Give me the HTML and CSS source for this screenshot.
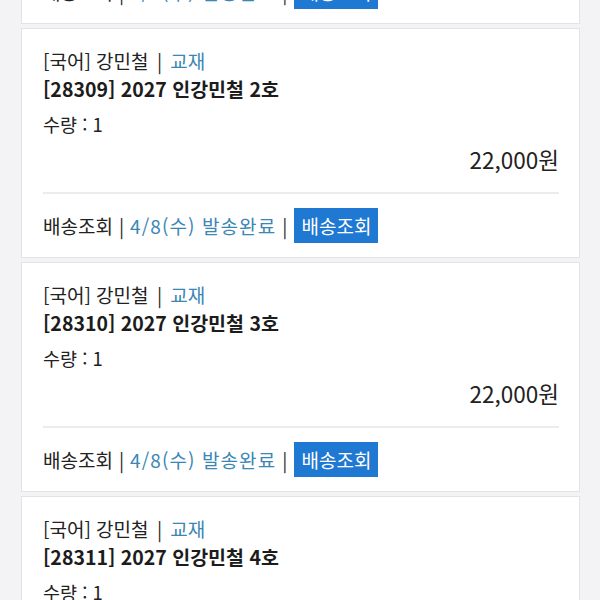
FILE: index.html
```html
<!DOCTYPE html>
<html lang="ko">
<head>
<meta charset="utf-8">
<link rel="stylesheet" href="styles.css">
</head>
<body>
<div class="list">
  <div class="card">
    <div class="info">
      <div class="cat">[국어] 강민철 <span class="bar">|</span> <span class="link">교재</span></div>
      <div class="title">[28308] 2027 인강민철 1호</div>
      <div class="qty">수량 : 1</div>
      <div class="price">22,000원</div>
    </div>
    <div class="ship">
      <span>배송조회</span><span class="bar">|</span><span class="link">4/8(수) 발송완료</span><span class="bar">|</span><span class="btn">배송조회</span>
    </div>
  </div>
  <div class="card">
    <div class="info">
      <div class="cat">[국어] 강민철 <span class="bar">|</span> <span class="link">교재</span></div>
      <div class="title">[28309] 2027 인강민철 2호</div>
      <div class="qty">수량 : 1</div>
      <div class="price">22,000원</div>
    </div>
    <div class="ship">
      <span>배송조회</span><span class="bar">|</span><span class="link">4/8(수) 발송완료</span><span class="bar">|</span><span class="btn">배송조회</span>
    </div>
  </div>
  <div class="card">
    <div class="info">
      <div class="cat">[국어] 강민철 <span class="bar">|</span> <span class="link">교재</span></div>
      <div class="title">[28310] 2027 인강민철 3호</div>
      <div class="qty">수량 : 1</div>
      <div class="price">22,000원</div>
    </div>
    <div class="ship">
      <span>배송조회</span><span class="bar">|</span><span class="link">4/8(수) 발송완료</span><span class="bar">|</span><span class="btn">배송조회</span>
    </div>
  </div>
  <div class="card">
    <div class="info">
      <div class="cat">[국어] 강민철 <span class="bar">|</span> <span class="link">교재</span></div>
      <div class="title">[28311] 2027 인강민철 4호</div>
      <div class="qty">수량 : 1</div>
      <div class="price">22,000원</div>
    </div>
    <div class="ship">
      <span>배송조회</span><span class="bar">|</span><span class="link">4/8(수) 발송완료</span><span class="bar">|</span><span class="btn">배송조회</span>
    </div>
  </div>
</div>
</body>
</html>
```
FILE: styles.css
```css
html, body {
  margin: 0;
  padding: 0;
  background: #f3f3f5;
  overflow: hidden;
}
body {
  font-family: "Noto Sans CJK KR", "Noto Sans", sans-serif;
  color: #222;
  width: 600px;
  height: 600px;
}
.list {
  display: flex;
  flex-direction: column;
  gap: 4px;
  padding: 0 20px 0 21px;
  margin-top: -206px;
}
.card {
  background: #fff;
  border: 1px solid #e3e3e5;
  padding: 0 20px 0 21px;
  height: 228px;
}
.info {
  padding-top: 17px;
  padding-bottom: 18px;
  border-bottom: 2px solid #ececee;
}
.cat {
  font-size: 19px;
  line-height: 29px;
}
.bar {
  color: #2a2a2a;
  margin: 0 3px;
}
.link {
  color: #3a86b4;
}
.title {
  font-size: 19.5px;
  line-height: 29px;
  font-weight: 700;
  color: #1c1c1c;
  margin-top: -1px;
}
.qty {
  font-size: 18.5px;
  line-height: 29px;
  margin-top: 7px;
}
.price {
  font-size: 22.5px;
  line-height: 29px;
  margin-top: 6px;
  text-align: right;
}
.ship {
  display: flex;
  align-items: center;
  height: 62px;
  font-size: 19px;
}
.ship .link {
  letter-spacing: 1.1px;
}
.ship .bar {
  margin: 0 6px;
}
.btn {
  background: #1f78d1;
  color: #fff;
  height: 35px;
  line-height: 35px;
  padding: 0 7px;
  margin-left: 1px;
}
```
